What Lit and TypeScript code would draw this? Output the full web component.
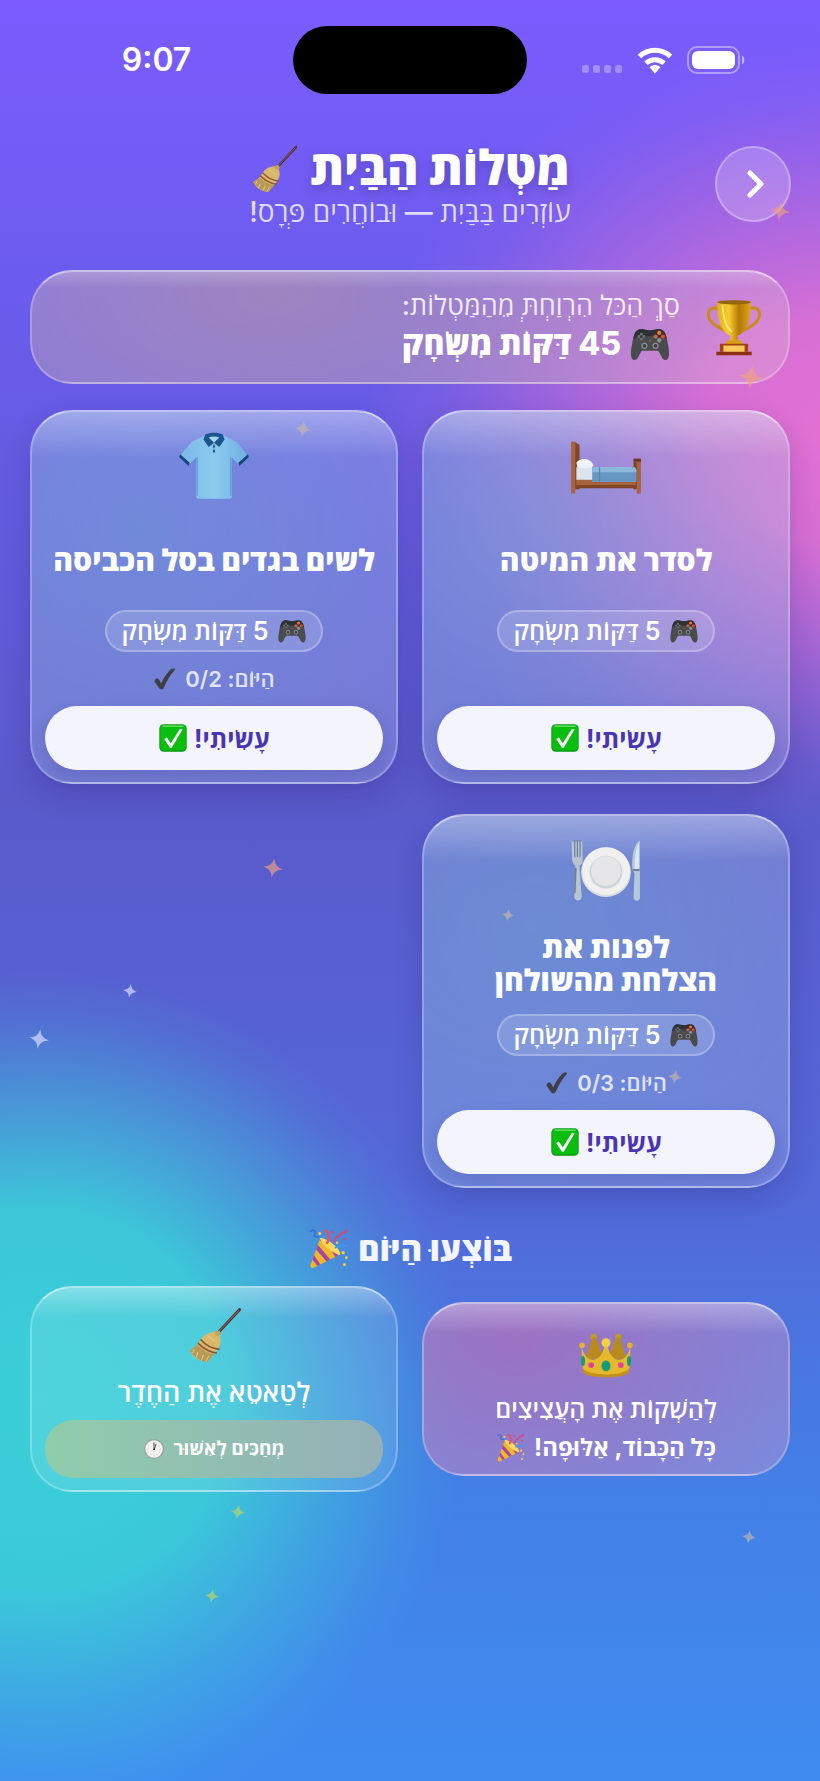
import { LitElement, html, css, svg } from "lit";
import { customElement } from "lit/decorators.js";

const art: Record<string, any> = {
  broom: svg`
    <g transform="translate(-4 -1) scale(1.1)">
    <path d="M37 29 61 3" stroke="#4a3230" stroke-width="3.200" stroke-linecap="round"/>
    <path d="M37.5 28 60 4" stroke="#8a6255" stroke-width="1.2" stroke-linecap="round"/>
    <path d="M36 28C28 27 21 31 17 38 14 43 10 46 6 48 9 55 16 60 25 61 29 56 35 50 38 45 41 39 41 33 36 28Z" fill="#d9b86a"/>
    <path d="M6 48c4 7 11 12 19 13 3-3 6-6 8-9C26 52 19 47 14 42 11 45 9 47 6 48Z" fill="#b99a55"/>
    <path d="M18 36c5 6 12 10 21 11M15 40c6 6 13 10 21 11" stroke="#8f5237" stroke-width="1.800" fill="none"/>
    <path d="M11 47l-2 4M15 50l-2 6M21 53l-2 6M27 54l-3 6M26 32l8 6" stroke="#e9d190" stroke-width="1" fill="none"/>
    <circle cx="37" cy="29" r="3" fill="#c89f52"/>
    </g>`,
  trophy: svg`
    <path d="M14 11C3 8 1 17 5 24 9 31 17 33 23 37M50 11C61 8 63 17 59 24 55 31 47 33 41 37" fill="none" stroke="#c88d0d" stroke-width="3.2"/>
    <path d="M13 3H51C52 24 46 38 36 42V48H28V42C18 38 12 24 13 3Z" fill="url(#gold)"/>
    <ellipse cx="32" cy="4" rx="19" ry="2.4" fill="#96650a"/>
    <path d="M19 8C20 23 24 33 29 37" stroke="#ffe978" stroke-width="2" fill="none" stroke-linecap="round"/>
    <path d="M24 47h16l3 5H21z" fill="#d9a013"/>
    <path d="M16 51h32v9H16z" fill="#a34313"/><path d="M12 60h40v4H12z" fill="#8c2f10"/>
    <path d="M20 53h24v7H20z" fill="#f5ca58"/>`,
  bed: svg`
    <path d="M2 9 7 12V54H2zM58 28h5v26h-5z" fill="#7e4527"/>
    <path d="M-1 9h4v49H-1z" fill="#a8653d"/>
    <path d="M4 44H60V52H4z" fill="#a7643b"/><path d="M4 50H60v3H4z" fill="#7e4527"/>
    <path d="M4 33H22V45H4z" fill="#dbe5ef"/>
    <path d="M4 29C7 24 17 24 20 31 21 34 10 35 5 33Z" fill="#eef4fa"/>
    <path d="M19 33H58C60 33 61 35 61 38V47H19Z" fill="#6798c4"/>
    <path d="M19 33H58C60 33 61 35 61 38H19Z" fill="#8cb8dc"/>
    <path d="M26 33V47" stroke="#55809f" stroke-width="1"/>
    <path d="M61 26h4v32h-4z" fill="#a8653d"/><path d="M58 25h7v3h-7z" fill="#6d391e"/>`,
  shirt: svg`
    <path d="M22 4 11 9 0 22 9 30 15 24V60C15 62 16 63 18 63H46C48 63 49 62 49 60V24L55 30 64 22 53 9 42 4Z" fill="url(#shirt)"/>
    <path d="M0 21 9 29 8 32-1 23.500ZM64 21 55 29 56 32 65 23.500Z" fill="#17457f"/>
    <path d="M16 24V60M48 24V60" stroke="#5592c7" stroke-width="1"/>
    <path d="M24 2C28 0 36 0 40 2L42 7 37 14 32 10 27 14 22 7Z" fill="#1c568f"/>
    <path d="M27 5C30 4 34 4 37 5L32 10Z" fill="#a7d4ee"/>
    <path d="M32 10V20" stroke="#6aa7d5" stroke-width="2"/>
    <circle cx="32" cy="13.500" r="1" fill="#1c4a78"/><circle cx="32" cy="18" r="1" fill="#1c4a78"/>`,
  plate: svg`
    <circle cx="32" cy="34" r="23.500" fill="#dededf"/><circle cx="32" cy="33" r="22.500" fill="#f0f0f1"/>
    <circle cx="32" cy="34" r="15.500" fill="#cdd5da"/><circle cx="32" cy="33" r="14" fill="#e6e6e8"/>
    <path d="M-.5 5 0 22C0 25 2 27 3 28L2 57C2 62 9 62 9 57L7 28C9 27 10 25 10 22L9.500 5" fill="#b8c4cf"/>
    <path d="M2.500 4V20M5 4V20M7.500 4V20" stroke="#5f7795" stroke-width="1"/>
    <path d="M3.500 30 2.500 54" stroke="#717e8b" stroke-width="1.500"/>
    <path d="M64 4C58 8 56 20 57 32L59 35 58 58C58 62 64 62 64 58Z" fill="#b4cadb"/>
    <path d="M63 6C60 12 59 22 59 31H63Z" fill="#dce8f0"/><path d="M57 31h7v2h-7z" fill="#72879b"/>`,
  crown: svg`
    <circle cx="17" cy="9" r="4" fill="#c59824"/><circle cx="47" cy="9" r="4" fill="#c59824"/>
    <path d="M15 10 7 36H30L20 10ZM49 10 57 36H34L44 10Z" fill="#b78b1e"/>
    <path d="M2 20C5 32 11 37 17 37 25 35 29 28 31 16H33C35 28 39 35 47 37 53 37 59 32 62 20L60 50C57 60 7 60 4 50Z" fill="#e6b92d"/>
    <path d="M4 47C10 57 54 57 60 47V51C57 60 7 60 4 51Z" fill="#c3901b"/>
    <circle cx="3" cy="19" r="3.500" fill="#e2b22c"/><circle cx="61" cy="19" r="3.500" fill="#e2b22c"/>
    <circle cx="32" cy="16" r="5.500" fill="#f6cf43"/>
    <ellipse cx="32" cy="44" rx="5.500" ry="6.500" fill="#159c77"/><circle cx="14" cy="43" r="3.500" fill="#de43a0"/><circle cx="50" cy="43" r="3.500" fill="#de43a0"/>
    <ellipse cx="4" cy="38" rx="2.500" ry="6" fill="#159c77"/><ellipse cx="60" cy="38" rx="2.500" ry="6" fill="#159c77"/>`,
  pad: svg`
    <path d="M13 9C20 6 23 10 32 10 41 10 44 6 51 9 58 12 59 21 61 32 64 46 64 58 57 58 51 58 49 47 45 43H19C15 47 13 58 7 58 0 58 0 46 3 32 5 21 6 12 13 9Z" fill="#4a4b4f"/>
    <path d="M13 9C20 6 23 10 32 10 41 10 44 6 51 9 56 12 58 18 59 24 50 18 14 18 5 24 6 18 8 12 13 9Z" fill="#303135"/>
    <path d="M18 14v12M12 20h12" stroke="#6f767c" stroke-width="4"/><circle cx="18" cy="20" r="2.500" fill="#35363a"/>
    <circle cx="47" cy="14" r="3.400" fill="#ff7330"/><circle cx="53" cy="20" r="3.400" fill="#e8481c"/><circle cx="41" cy="20" r="3.400" fill="#c3694a"/><circle cx="47" cy="26" r="3.400" fill="#8d959b"/>
    <circle cx="23" cy="35" r="5" fill="#8b9399"/><circle cx="41" cy="35" r="5" fill="#8b9399"/><circle cx="23" cy="35" r="3" fill="#3b3c40"/><circle cx="41" cy="35" r="3" fill="#3b3c40"/>
    <circle cx="32" cy="27" r="1.800" fill="#b54a2a"/>`,
  party: svg`
    <path d="M18 14 2 58C1 62 4 64 8 62L50 41C46 30 30 16 18 14Z" fill="#f2b62d"/>
    <path d="M14 25 34 49 28 52 11 33ZM20 16C30 20 43 32 47 43L42 45C37 34 28 24 17 18ZM8 42 18 57 13 59 5 49Z" fill="#a5489f"/>
    <path d="M18 14C30 14 52 33 50 41 43 42 18 24 18 14Z" fill="#ffd95a"/>
    <path d="M2 3C8 0 12 4 9 8 6 12 12 14 16 12" stroke="#2e70e0" stroke-width="2.500" fill="none" stroke-linecap="round"/>
    <path d="M26 2C34 7 33 16 29 22" stroke="#ef4a63" stroke-width="4" fill="none" stroke-linecap="round"/>
    <path d="M40 20C44 18 40 12 46 12 52 12 48 5 56 5 61 5 60 1 60 1" stroke="#e3406e" stroke-width="3" fill="none" stroke-linecap="round"/>
    <path d="M42 30C48 26 54 26 62 27" stroke="#3f9af2" stroke-width="2.500" fill="none" stroke-linecap="round"/>
    <g fill="#f8cc3d"><circle cx="17" cy="7" r="2.500"/><circle cx="45" cy="22" r="2"/><circle cx="55" cy="38" r="2.600"/><circle cx="60" cy="46" r="2.300"/><circle cx="57" cy="57" r="2.500"/></g>
    <g fill="#e3406e"><circle cx="57" cy="16" r="2"/><circle cx="38" cy="5" r="2"/></g>`,
  done: svg`
    <rect x="1" y="1" width="62" height="62" rx="10" fill="#079a12"/><rect x="3" y="3" width="58" height="57" rx="8" fill="#09be0e"/>
    <path d="M9 5H55" stroke="#74e56f" stroke-width="3" stroke-linecap="round"/>
    <path d="M12 34 18 31 27 44 47 12H54L29 54H25Z" fill="#fff"/>`,
  tick: svg`<path d="M3 36C6 29 13 29 16 35L21 45C29 27 39 12 51 3 55 1 63 2 60 6 47 20 37 37 29 56 26 63 17 63 14 56L4 42C2 40 2 38 3 36Z" fill="#3e3f45"/>`,
  clock: svg`
    <circle cx="32" cy="32" r="31" fill="#9b9fa3"/><circle cx="32" cy="32" r="27" fill="#f3f3f2"/>
    <path d="M32 10v4M32 50v4M10 32h4M50 32h4M43 13l-2 3M51 21l-3 2M51 43l-3-2M43 51l-2-3M21 51l2-3M13 43l3-2M13 21l3 2M21 13l2 3" stroke="#999" stroke-width="1.500"/>
    <path d="M32 34V13M32 34 38 18" stroke="#222" stroke-width="2.400" stroke-linecap="round"/><circle cx="32" cy="33" r="2.200" fill="#222"/>`,
};

const icon = (name: string, size: string) => html`
  <svg class="icon ${size}" viewBox="-2 -2 68 68" aria-hidden="true">
    <defs>
      <linearGradient id="gold"><stop offset="0" stop-color="#e9ae18"/><stop offset=".35" stop-color="#f7cb32"/><stop offset=".65" stop-color="#b47906"/><stop offset="1" stop-color="#dca61b"/></linearGradient>
      <linearGradient id="shirt"><stop offset="0" stop-color="#7ab8e6"/><stop offset=".5" stop-color="#8ccbef"/><stop offset="1" stop-color="#6fb0e2"/></linearGradient>
    </defs>
    ${art[name]}
  </svg>`;

interface Chore { icon: string; title: string; today?: string }

const chores: Chore[] = [
  { icon: "bed", title: "לסדר את המיטה" },
  { icon: "shirt", title: "לשים בגדים בסל הכביסה", today: "0/2" },
  { icon: "plate", title: "לפנות את הצלחת מהשולחן", today: "0/3" },
];

const sparkles = [
  { x: 95.1, y: 211, size: 20, tone: "amber" },
  { x: 91.6, y: 377, size: 25, tone: "amber" },
  { x: 37, y: 429, size: 17, tone: "sand" },
  { x: 33.3, y: 868, size: 20, tone: "amber" },
  { x: 62, y: 915, size: 13, tone: "sand" },
  { x: 15.9, y: 991, size: 14, tone: "pale" },
  { x: 4.7, y: 1039, size: 20, tone: "pale" },
  { x: 82.3, y: 1077, size: 15, tone: "sand" },
  { x: 29, y: 1512, size: 15, tone: "lime" },
  { x: 91.3, y: 1537, size: 14, tone: "sand" },
  { x: 25.9, y: 1596, size: 14, tone: "lime" },
];

@customElement("app-root")
export class AppRoot extends LitElement {
  static styles = css`
    :host {
      display: block;
      font-family: Inter, "Open Sans", "Noto Sans", "DejaVu Sans", sans-serif;
      color: #fff;
    }
    * { box-sizing: border-box; }
    h1, h2, h3, p { margin: 0; }
    .page {
      position: relative;
      overflow: hidden;
      min-height: 100vh;
      padding-bottom: 40px;
      background:
        radial-gradient(490px 390px at 104% 430px, #e571d2 0%, #e571d2e0 30%, #e571d266 64%, #e571d21a 86%, #e571d200 100%),
        radial-gradient(430px 430px at 40px 1400px, #3ad0d8 0%, #3ad0d8e6 44%, #3ad0d866 72%, #3ad0d81a 90%, #3ad0d800 100%),
        linear-gradient(180deg, #7c5cff 0, #6a5cec 300px, #5a5acb 800px, #5468d8 1180px, #437fe6 1480px, #3f8cf0 1781px);
    }
    .icon { display: block; flex: none; overflow: visible; }
    .s22 { width: 22px; height: 22px; }
    .s24 { width: 24px; height: 24px; }
    .s30 { width: 30px; height: 30px; }
    .s42 { width: 42px; height: 42px; }
    .s48 { width: 48px; height: 48px; }
    .s56 { width: 56px; height: 56px; }
    .s60 { width: 60px; height: 60px; }
    .s72 { width: 72px; height: 72px; }

    .status {
      direction: ltr;
      display: grid;
      grid-template-columns: 1fr auto 1fr;
      align-items: center;
      padding: 26px 30px 0;
      height: 94px;
    }
    .time {
      font-size: 32px;
      line-height: 40px;
      font-weight: 600;
      justify-self: center;
      padding-right: 10px;
    }
    .island { width: 234px; height: 68px; border-radius: 34px; background: #000; }
    .signals { display: flex; align-items: center; gap: 14px; justify-self: end; padding-right: 45px; }

    .header {
      display: grid;
      grid-template-columns: 1fr auto 1fr;
      align-items: center;
      padding: 44px 29px 0;
    }
    .back {
      width: 76px;
      height: 76px;
      padding: 0;
      display: grid;
      place-items: center;
      border-radius: 50%;
      border: 2px solid #ffffff4d;
      background: #ffffff33;
      color: #fff;
    }
    .heading { text-align: center; }
    .heading h1 {
      display: flex;
      justify-content: center;
      align-items: center;
      gap: 12px;
      padding-top: 4px;
      font-size: 48px;
      line-height: 52px;
      font-weight: 800;
      text-shadow: 0 4px 12px #0003;
    }
    .heading p { font-size: 28px; line-height: 36px; font-weight: 500; color: #ffffffc7; }

    .glass {
      border: 2px solid #ffffff40;
      border-top-color: #ffffff80;
      border-radius: 42px;
      box-shadow: 0 12px 28px #1e146433;
    }
    .total {
      margin: 40px 30px 0;
      min-height: 114px;
      padding: 0 24px;
      display: flex;
      align-items: center;
      gap: 24px;
      background:
        linear-gradient(180deg, #ffffff33, #fff0 16px),
        radial-gradient(480px 240px at 32% 20%, #b58f988c, #b58f9859 45%, #b58f981a),
        #ffffff2b;
      box-shadow: none;
    }
    .sum { display: flex; flex-direction: column; align-items: flex-end; }
    .sum p { font-size: 27px; line-height: 34px; font-weight: 500; color: #ffffffd9; }
    .sum strong { display: flex; align-items: center; gap: 8px; font-size: 32px; line-height: 38px; font-weight: 800; }

    .grid {
      display: grid;
      grid-template-columns: 1fr 1fr;
      gap: 30px 24px;
      padding: 0 30px;
    }
    .chores { margin-top: 26px; }
    .card {
      display: flex;
      flex-direction: column;
      align-items: center;
      text-align: center;
      padding: 18px 13px 12px;
      background:
        linear-gradient(180deg, #ffffff4d, #fff0 46px),
        radial-gradient(420px 380px at 30% 30%, #66a3d073, #66a3d000),
        #ffffff29;
    }
    .name {
      display: grid;
      place-items: center;
      min-height: 68px;
      max-width: 334px;
      margin-top: 24px;
      font-size: 30px;
      line-height: 33px;
      font-weight: 800;
      text-wrap: balance;
    }
    .reward {
      display: flex;
      align-items: center;
      gap: 8px;
      margin-top: 16px;
      height: 42px;
      padding: 0 14px;
      border: 2px solid #ffffff40;
      border-radius: 21px;
      background: #ffffff26;
      font-size: 25px;
      line-height: 30px;
      font-weight: 600;
    }
    .today {
      display: flex;
      align-items: center;
      gap: 8px;
      height: 28px;
      margin-top: 13px;
      font-size: 22px;
      line-height: 28px;
      font-weight: 600;
      color: #ffffffcc;
    }
    .did {
      align-self: stretch;
      display: flex;
      justify-content: center;
      align-items: center;
      gap: 6px;
      height: 64px;
      margin-top: 13px;
      padding: 0;
      border: 0;
      border-radius: 32px;
      background: #f4f4fd;
      color: #4935b1;
      font: inherit;
      font-size: 25px;
      font-weight: 700;
      box-shadow: 0 6px 16px #1e146426;
    }
    .section {
      display: flex;
      justify-content: center;
      align-items: center;
      gap: 8px;
      margin-top: 37px;
      font-size: 33px;
      line-height: 48px;
      font-weight: 800;
      color: #fffffff0;
    }
    .finished { margin-top: 13px; align-items: center; }
    .finished .card {
      background:
        linear-gradient(180deg, #ffffff4d, #fff0 30px),
        #ffffff1a;
      box-shadow: none;
    }
    .finished .praised {
      padding-top: 24px;
      padding-bottom: 10px;
      background:
        linear-gradient(180deg, #ffffff4d, #fff0 30px),
        radial-gradient(340px 280px at 26% 20%, #ba5eaa99, #ba5eaa2e),
        #ffffff33;
    }
    .label { margin-top: 14px; font-size: 27px; line-height: 34px; font-weight: 600; }
    .praised .label { margin-top: 8px; font-size: 25px; }
    .waiting {
      align-self: stretch;
      display: flex;
      justify-content: center;
      align-items: center;
      gap: 8px;
      height: 58px;
      margin-top: 10px;
      border-radius: 28px;
      background: linear-gradient(90deg, #8fcdab, #94b0b8);
      font-size: 19px;
      line-height: 24px;
      font-weight: 700;
    }
    .praise {
      display: flex;
      align-items: center;
      gap: 8px;
      margin-top: 6px;
      font-size: 24px;
      line-height: 32px;
      font-weight: 700;
    }
    .sparkle { position: absolute; transform: translate(-50%, -50%) rotate(8deg); pointer-events: none; }
    .amber { fill: #f1a37c; opacity: .65; }
    .sand { fill: #c5b9a4; opacity: .65; }
    .pale { fill: #d9dcff; opacity: .7; }
    .lime { fill: #9bcf86; opacity: .9; }
  `;

  private chore(c: Chore) {
    return html`
      <article class="glass card">
        ${icon(c.icon, "s72")}
        <h3 class="name">${c.title}</h3>
        <p class="reward">${icon("pad", "s30")}<span>5 דַּקּוֹת מִשְׂחָק</span></p>
        <div class="today">${c.today ? html`<span>הַיּוֹם: ${c.today}</span>${icon("tick", "s24")}` : ""}</div>
        <button class="did"><span>עָשִׂיתִי!</span>${icon("done", "s30")}</button>
      </article>`;
  }

  render() {
    return html`
      <main class="page" dir="rtl" lang="he">
        <div class="status">
          <span class="time">9:07</span>
          <div class="island"></div>
          <div class="signals">
            <svg width="41" height="26" fill="#fff" opacity=".3"><rect y="18" width="7" height="8" rx="2.500"/><rect x="11" y="18" width="7" height="8" rx="2.500"/><rect x="22" y="18" width="7" height="8" rx="2.500"/><rect x="33" y="18" width="7" height="8" rx="2.500"/></svg>
            <svg width="36" height="28" viewBox="0 0 36 28" fill="none" stroke="#fff" stroke-width="5"><path d="M2.500 10.500a22.500 22.500 0 0 1 31 0"/><path d="M9 17.300a13 13 0 0 1 18 0"/><path d="M18 27.500l-5.500-6.200a8 8 0 0 1 11 0z" fill="#fff" stroke="none"/></svg>
            <svg width="58" height="28" viewBox="0 0 58 28"><rect x="1" y="1" width="51" height="26" rx="9" fill="none" stroke="#fff" stroke-opacity=".4" stroke-width="2"/><rect x="5" y="5" width="43" height="18" rx="6" fill="#fff"/><path d="M55 9.500c3 1 3 8 0 9z" fill="#fff" opacity=".5"/></svg>
          </div>
        </div>

        <header class="header">
          <button class="back" aria-label="חזרה">
            <svg width="32" height="32" viewBox="0 0 32 32" fill="none" stroke="currentColor" stroke-width="5" stroke-linecap="round" stroke-linejoin="round"><path d="M13 5l11 11-11 11"/></svg>
          </button>
          <div class="heading">
            <h1><span>מַטְלוֹת הַבַּיִת</span>${icon("broom", "s48")}</h1>
            <p>עוֹזְרִים בַּבַּיִת — וּבוֹחֲרִים פְּרָס!</p>
          </div>
        </header>

        <section class="glass total">
          ${icon("trophy", "s60")}
          <div class="sum">
            <p>סַךְ הַכֹּל הִרְוַחְתְּ מֵהַמַּטְלוֹת:</p>
            <strong>${icon("pad", "s42")}<span>45 דַּקּוֹת מִשְׂחָק</span></strong>
          </div>
        </section>

        <section class="grid chores">${chores.map((c) => this.chore(c))}</section>

        <h2 class="section"><span>בּוֹצְעוּ הַיּוֹם</span>${icon("party", "s42")}</h2>
        <section class="grid finished">
          <article class="glass card praised">
            ${icon("crown", "s56")}
            <h3 class="label">לְהַשְׁקוֹת אֶת הָעֲצִיצִים</h3>
            <p class="praise"><span>כָּל הַכָּבוֹד, אַלּוּפָה!</span>${icon("party", "s30")}</p>
          </article>
          <article class="glass card">
            ${icon("broom", "s56")}
            <h3 class="label">לְטַאטֵא אֶת הַחֶדֶר</h3>
            <p class="waiting"><span>מְחַכִּים לְאִשּׁוּר</span>${icon("clock", "s22")}</p>
          </article>
        </section>

        ${sparkles.map((s) => html`
          <svg class="sparkle ${s.tone}" style="left:${s.x}%;top:${s.y}px" width=${s.size} height=${s.size} viewBox="0 0 24 24" aria-hidden="true">
            <path d="M12 0C13 7 17 11 24 12 17 13 13 17 12 24 11 17 7 13 0 12 7 11 11 7 12 0Z"/>
          </svg>`)}
      </main>`;
  }
}
